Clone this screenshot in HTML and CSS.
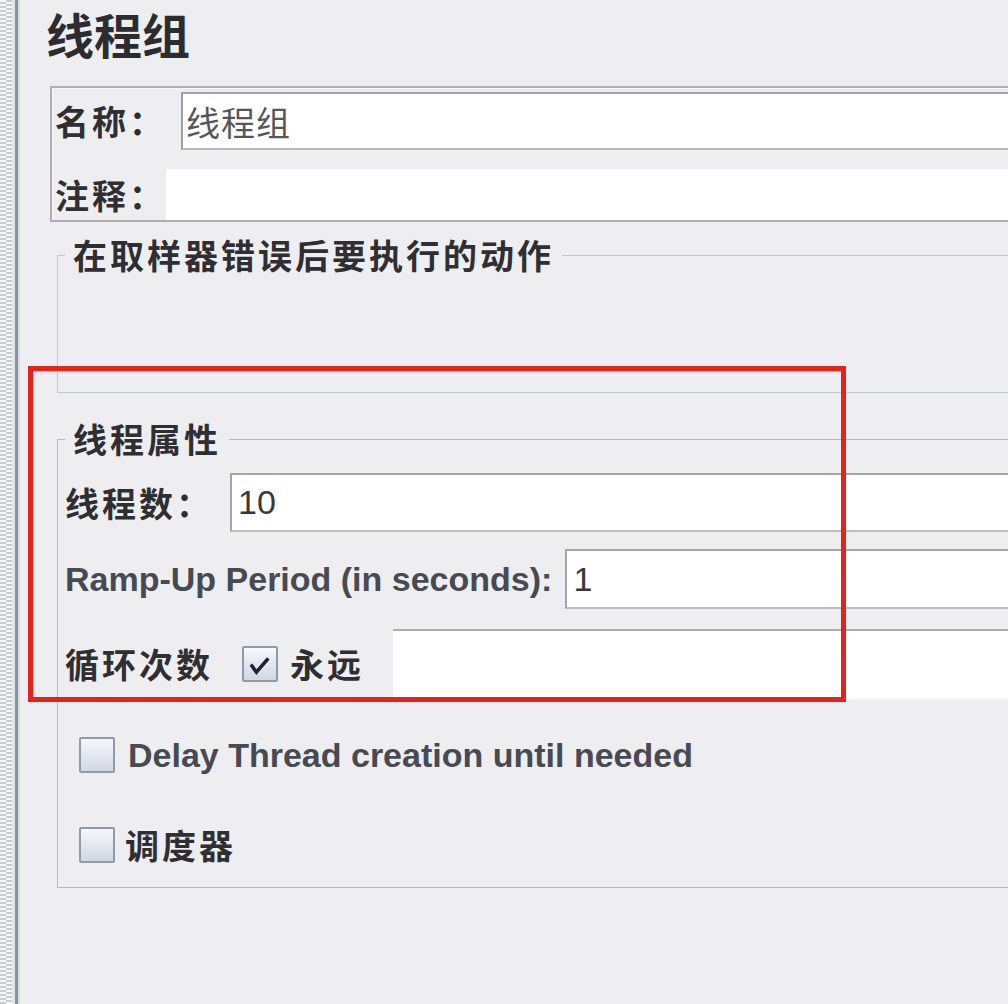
FILE: index.html
```html
<!DOCTYPE html>
<html lang="zh-CN">
<head>
<meta charset="utf-8">
<title>线程组</title>
<link rel="stylesheet" href="styles.css">
</head>
<body>
<div class="app">
  <div class="rail"></div>
  <main class="panel">
    <h1 class="title">线程组</h1>

    <section class="namebox">
      <div class="row name-row">
        <span class="label cjk name-label">名称：</span>
        <div class="field name-field">线程组</div>
      </div>
      <div class="row comment-row">
        <span class="label cjk comment-label">注释：</span>
        <div class="field comment-field"></div>
      </div>
    </section>

    <fieldset class="group error-group">
      <legend class="cjk">在取样器错误后要执行的动作</legend>
      <div class="error-body"></div>
    </fieldset>

    <fieldset class="group thread-group">
      <legend class="cjk">线程属性</legend>
      <div class="row threads-row">
        <span class="label cjk threads-label">线程数：</span>
        <div class="field threads-field">10</div>
      </div>
      <div class="row ramp-row">
        <span class="label latin">Ramp-Up Period (in seconds):</span>
        <div class="field ramp-field">1</div>
      </div>
      <div class="row loop-row">
        <span class="label cjk loop-label">循环次数</span>
        <span class="check checked">
          <svg viewBox="0 0 36 36" width="36" height="36"><polyline points="9,18 14,25 26,11" fill="none" stroke="#1c2333" stroke-width="4" stroke-linecap="square"/></svg>
        </span>
        <span class="label cjk forever-label">永远</span>
        <div class="field loop-field"></div>
      </div>
      <div class="row opt-row delay-row">
        <span class="check"></span>
        <span class="label latin">Delay Thread creation until needed</span>
      </div>
      <div class="row opt-row sched-row">
        <span class="check"></span>
        <span class="label cjk sched-label">调度器</span>
      </div>
    </fieldset>
  </main>
</div>
<div class="highlight"></div>
</body>
</html>
```

FILE: styles.css
```css
html, body {
  margin: 0;
  padding: 0;
  overflow: hidden;
  background: #eeeef0;
}

body {
  width: 1008px;
  height: 1004px;
  position: relative;
  font-family: "Noto Sans CJK SC", "Liberation Sans", sans-serif;
  color: #2f2f33;
}

.app {
  display: flex;
  height: 1004px;
}

.rail {
  flex: none;
  width: 20px;
  height: 100%;
  background:
    linear-gradient(to right,
      transparent 0 12px,
      #e4e6ea 12px 15px,
      #8793a3 15px 18px,
      #d6dbe2 18px 20px),
    repeating-conic-gradient(#c9ccd2 0 25%, #f4f5f7 0 50%) 0 0 / 4px 4px;
  background-repeat: no-repeat, repeat-y;
  background-size: 20px 100%, 12px 4px;
}

.panel {
  flex: none;
  width: 1100px;
  padding-left: 30px;
  box-sizing: border-box;
}

.title {
  margin: 0 0 29px -4px;
  padding-top: 9px;
  font-size: 48px;
  line-height: 48px;
  font-weight: 700;
  color: #2c2c30;
}

.cjk {
  font-family: "Noto Sans CJK SC", sans-serif;
  font-size: 34px;
  letter-spacing: 3px;
  font-weight: 700;
}

.latin {
  font-family: "Liberation Sans", Arial, sans-serif;
  font-size: 34px;
  font-weight: 700;
  color: #474953;
}

.row {
  display: flex;
  align-items: center;
}

.label {
  flex: none;
  line-height: 40px;
  white-space: nowrap;
}

.field {
  flex: 1;
  box-sizing: border-box;
  background: #ffffff;
  font-family: "Liberation Sans", "Noto Sans CJK SC", sans-serif;
  font-size: 34px;
  color: #38383c;
  display: flex;
  align-items: center;
}

/* name / comment box */
.namebox {
  border: 2px solid #aeaeb3;
  box-shadow: inset 1px 1px 0 #f8f8fa;
  padding: 4px 0 0 3px;
  display: flex;
  flex-direction: column;
  gap: 19px;
}

.name-label { width: 126px; }
.comment-label { width: 111px; }

.name-field {
  height: 58px;
  border-top: 2px solid #a3a3a8;
  border-left: 2px solid #9d9da2;
  border-bottom: 2px solid #b9b9bd;
  padding-left: 3px;
  font-family: "Noto Sans CJK SC", sans-serif;
  color: #55555a;
  letter-spacing: 1px;
}

.comment-field {
  height: 51px;
}

/* group boxes */
.group {
  margin: 0 0 0 7px;
  padding: 0 0 0 7px;
  border: 1px solid #c3c7d5;
  min-width: 0;
}

.group legend {
  margin-left: 0;
  padding: 0 8px 0 8px;
  line-height: 36px;
  color: #2f2f33;
}

.error-group {
  margin-top: 15px;
}

.error-body {
  height: 119px;
}

.thread-group {
  margin-top: 28px;
  border-color: #b9b9be;
  padding-top: 16px;
  padding-bottom: 16px;
}

.threads-label { width: 165px; }
.threads-field {
  height: 59px;
  border: 2px solid #a4a4a9;
  border-bottom-color: #bdbdc1;
  border-right: none;
  padding-left: 6px;
}

.ramp-row {
  margin-top: 17px;
  gap: 13px;
}
.ramp-field {
  height: 60px;
  border: 2px solid #a4a4a9;
  border-bottom-color: #bdbdc1;
  border-right: none;
  padding-left: 6px;
}

.loop-row {
  margin-top: 20px;
}
.loop-label { width: 177px; }
.forever-label { margin-left: 12px; width: 103px; }
.loop-field {
  height: 70px;
  border-top: 2px solid #acacb1;
}

.check {
  flex: none;
  width: 36px;
  height: 36px;
  box-sizing: border-box;
  border: 2px solid #8f9aab;
  border-radius: 2px;
  background: linear-gradient(#f6f7fa, #d1d8e3);
  display: flex;
}

.opt-row {
  height: 52px;
  padding-left: 14px;
  gap: 13px;
}

.delay-row { margin-top: 30px; }
.sched-row { margin-top: 38px; }
.sched-label { margin-left: -3px; }

/* annotation overlay */
.highlight {
  position: absolute;
  left: 28px;
  top: 366px;
  width: 818px;
  height: 336px;
  box-sizing: border-box;
  border: 5px solid #e5231a;
  pointer-events: none;
}
```
